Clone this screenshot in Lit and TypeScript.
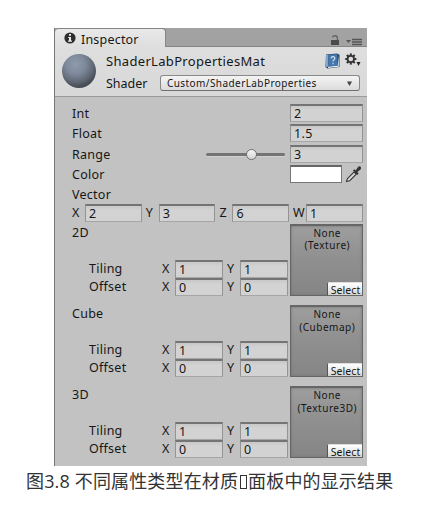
import { LitElement, html, css, svg } from "lit";
import { customElement, property } from "lit/decorators.js";

@customElement("value-field")
class ValueField extends LitElement {
  @property() value = "";
  static styles = css`
    :host { display: block; box-sizing: border-box; height: 18px; min-width: 0;
      border: 1px solid #949494; border-top: 2px solid #747474; border-bottom-color: #a6a6a6;
      background: linear-gradient(#c8c8c8, #d3d3d3 30%, #d2d2d2);
      padding-left: 3px; line-height: 15px; font-size: 12.5px; letter-spacing: 0.4px; }
  `;
  render() { return html`${this.value}`; }
}

@customElement("texture-block")
class TextureBlock extends LitElement {
  @property() label = "";
  @property() kind = "";
  static styles = css`
    :host { display: grid; grid-template-columns: 218px 72.5px; height: 81.2px; }
    .title { height: 18px; line-height: 18px; }
    .left { display: flex; flex-direction: column; height: 72px; }
    .gap { flex: 1; }
    .line { display: grid; grid-template-columns: 73px 13px 48px 4px 13px 48px; margin-left: 17px; height: 18px; line-height: 18px; }
    .line .y { grid-column: 5; }
    .thumb { position: relative; box-sizing: border-box; height: 72px; border: 1px solid #666; border-top-width: 2px;
      background: linear-gradient(#9e9e9e, #909090 45%, #858585); box-shadow: inset 0 0 3px #737373;
      text-align: center; font-size: 10px; line-height: 12.5px; letter-spacing: 0.52px; padding-top: 1px; white-space: nowrap; }
    .thumb { padding-left: 2px; }
    .select { position: absolute; right: 0; bottom: 0; width: 35px; height: 13px; box-sizing: border-box;
      border-left: 1px solid #555; border-top: 1px solid #ddd; border-radius: 2px 0 0 0;
      background: linear-gradient(#fff, #ececec 50%, #d3d3d3); font-size: 10.5px; letter-spacing: 0.1px; line-height: 15px; padding-left: 2px; }
  `;
  render() {
    const line = (name: string, v: string) => html`<div class="line">
      <span>${name}</span><span>X</span><value-field .value=${v}></value-field>
      <span class="y">Y</span><value-field .value=${v}></value-field></div>`;
    return html`<div class="left"><div class="title">${this.label}</div><div class="gap"></div>
      ${line("Tiling", "1")}${line("Offset", "0")}</div>
      <div class="thumb">None<br />(${this.kind})<div class="select">Select</div></div>`;
  }
}

const gearTeeth = [0, 45, 90, 135, 180, 225, 270, 315];

@customElement("app-root")
class AppRoot extends LitElement {
  static styles = css`
    :host { display: block; width: 447px; height: 515px; background: #fff; overflow: hidden; }
    .panel { box-sizing: border-box; width: 313px; height: 438px; margin: 28px 0 0 54px; border-left: 1px solid #777;
      background: #c2c2c2; color: #161616; font: 12.5px "Noto Sans", sans-serif; letter-spacing: 0.25px; overflow: hidden; }
    .panel svg { display: block; }
    .tabs { display: flex; height: 19px; box-sizing: border-box; background: #a2a2a2; border-bottom: 1px solid #858585; }
    .tab { display: flex; align-items: center; width: 111px; height: 19px; box-sizing: border-box; padding-left: 9px;
      background: linear-gradient(#e9e9e9, #dedede); border: 1px solid #858585; border-bottom: 0; border-left: 0; border-radius: 4px 4px 0 0; }
    .tab span { margin: 3px 0 0 5px; line-height: 16px; letter-spacing: 0.2px; }
    .tools { margin-left: auto; display: flex; gap: 6px; padding: 7px 5px 0 0; }
    .header { display: flex; box-sizing: border-box; height: 50px; background: linear-gradient(#dedede, #d8d8d8); border-bottom: 1px solid #9b9b9b; }
    .ball { width: 34px; height: 34px; margin: 7px 0 0 7px; border-radius: 50%;
      background: radial-gradient(circle at 40% 30%, #8e9bad 0%, #7f8b9c 30%, #606975 56%, #434750 76%, #34363c 100%); }
    .info { margin-left: 10px; width: 255px; }
    .name { display: flex; height: 24px; align-items: center; }
    .name b { flex: 1; font-weight: 400; font-size: 13px; letter-spacing: 0.32px; line-height: 18px; padding-top: 3px; }
    .book { margin: 3px 5px 0 0; } .gear { margin: 1px 0 0; }
    .shader { display: flex; align-items: center; height: 24px; }
    .shader span { width: 54px; font-size: 12.5px; letter-spacing: 0; }
    .drop { display: flex; align-items: center; justify-content: space-between; box-sizing: border-box; width: 200px; height: 16px; padding: 0 7px 0 6px;
      border: 1px solid #888; border-bottom-color: #707070; border-radius: 3px; background: linear-gradient(#f4f4f4, #dcdcdc);
      font-size: 10px; letter-spacing: 0.42px; }
    .body { padding: 7px 4px 0 17px; }
    .row { display: grid; grid-template-columns: 134px 84px 72.5px; height: 20.3px; }
    .row > span { line-height: 19px; }
    .row.short { height: 18.7px; }
    .row value-field { grid-column: 3; }
    .slider { grid-column: 2; position: relative; width: 79px; height: 3px; margin-top: 8px; border-radius: 2px; background: #747474; box-shadow: 0 1px #d0d0d0; }
    .knob { position: absolute; box-sizing: border-box; left: 40px; top: -4px; width: 11px; height: 11px; border: 1px solid #707070; border-radius: 50%; background: linear-gradient(#f5f5f5, #d5d5d5); }
    .color { grid-column: 3; display: flex; gap: 3px; }
    .swatch { box-sizing: border-box; width: 52px; height: 18px; background: #fff; border: 1px solid #777; border-top: 2px solid #666; }
    .vector { display: flex; gap: 4.2px; height: 20px; line-height: 18px; }
    .pair { display: grid; grid-template-columns: 13px 56.5px; }
    .caption { display: flex; align-items: center; margin: 0 0 0 26px; height: 30px; white-space: pre; color: #333;
      font: 18px/30px "Open Sans", "Noto Sans CJK SC", sans-serif; letter-spacing: 0.15px; }
    .missing { box-sizing: border-box; width: 7px; height: 14px; margin: 1px 1.5px 0 1.500px; border: 1px solid #333; }
  `;
  render() {
    return html`<div class="panel">
      <div class="tabs">
        <div class="tab">
          <svg width="12" height="12" viewBox="0 0 12 12"><circle cx="6" cy="6" r="5.6" fill="#2e2e2e" /><path d="M5 2h2v1.8H5zM4.2 4.9H7v3.6h.9v1.2H4.1V8.5H5V6h-.8z" fill="#eee" /></svg>
          <span>Inspector</span>
        </div>
        <div class="tools">
          <svg width="10" height="11" viewBox="0 0 10 11"><path d="M1 5h8v5H1z" fill="#4b4b4b" /><path d="M2.500 2.500Q2.800 .8 4.800 .8q2.600 0 2.600 2.500V5" fill="none" stroke="#666" stroke-width="1.4" /></svg>
          <svg width="16" height="11" viewBox="0 0 16 11"><path d="M0 5h5L2.500 8z" fill="#555" /><path d="M6 4.500h10M6 7h10M6 9.500h10" stroke="#555" stroke-width="1.300" /></svg>
        </div>
      </div>
      <div class="header">
        <div class="ball"></div>
        <div class="info">
          <div class="name"><b>ShaderLabPropertiesMat</b>
            <svg class="book" width="15" height="16" viewBox="0 0 15 16"><path d="M1 1.500L12 .5l2.500 1.200V14l-12 1.500L.5 14z" fill="#263f5c" /><path d="M3 13.500l9.500-.8 1.300-10v11L3 15z" fill="#e3edf5" /><path d="M1 2l2.200-.3v12L1 14z" fill="#83a7cb" /><path d="M3.200 1.700L12.400 1v11.800l-9.200.8z" fill="#4477ab" /><path d="M6 5.300q.4-1.700 2-1.700 2 .1 1.900 1.700 0 1-1.200 1.600-.7.400-.7 1.500M8 9.800v1.400" fill="none" stroke="#d3e2f0" stroke-width="1.100" /></svg>
            <svg class="gear" width="16" height="14" viewBox="0 0 16 14"><g transform="translate(5.800 6)">${gearTeeth.map((a) => svg`<path d="M-1-5.600h2v2.500h-2z" fill="#333" transform="rotate(${a})" />`)}<circle r="3.200" fill="none" stroke="#333" stroke-width="1.700" /></g><path d="M11.500 9h4L13.500 13z" fill="#222" /></svg>
          </div>
          <div class="shader"><span>Shader</span>
            <div class="drop">Custom/ShaderLabProperties<svg width="5" height="5" viewBox="0 0 5 5"><path d="M0 .5h5L2.500 5z" fill="#444" /></svg></div>
          </div>
        </div>
      </div>
      <div class="body">
        <div class="row"><span>Int</span><value-field value="2"></value-field></div>
        <div class="row"><span>Float</span><value-field value="1.5"></value-field></div>
        <div class="row"><span>Range</span><div class="slider"><div class="knob"></div></div><value-field value="3"></value-field></div>
        <div class="row"><span>Color</span><div class="color"><div class="swatch"></div>
          <svg width="17" height="18" viewBox="0 0 17 18"><path d="M1.500 16.500l1-3L9 7l2.200 2.200-6.500 6.500z" fill="#ddd" stroke="#3a3a3a" stroke-width="1.100" /><path d="M8 5.500l1.200-1.200 1.500 1.200L13 2q1.400-1.300 2.700-.2 1 1.400-.2 2.700L12.300 7l1.300 1.600-1.300 1.300z" fill="#333" /></svg></div></div>
        <div class="row short"><span>Vector</span></div>
        <div class="vector">${[["X", "2"], ["Y", "3"], ["Z", "6"], ["W", "1"]].map(([k, v]) => html`<div class="pair"><span>${k}</span><value-field .value=${v}></value-field></div>`)}</div>
        <texture-block label="2D" kind="Texture"></texture-block>
        <texture-block label="Cube" kind="Cubemap"></texture-block>
        <texture-block label="3D" kind="Texture3D"></texture-block>
      </div>
    </div>
    <div class="caption"><span>图3.8 不同属性类型在材质</span><i class="missing"></i><span>面板中的显示结果</span></div>`;
  }
}
